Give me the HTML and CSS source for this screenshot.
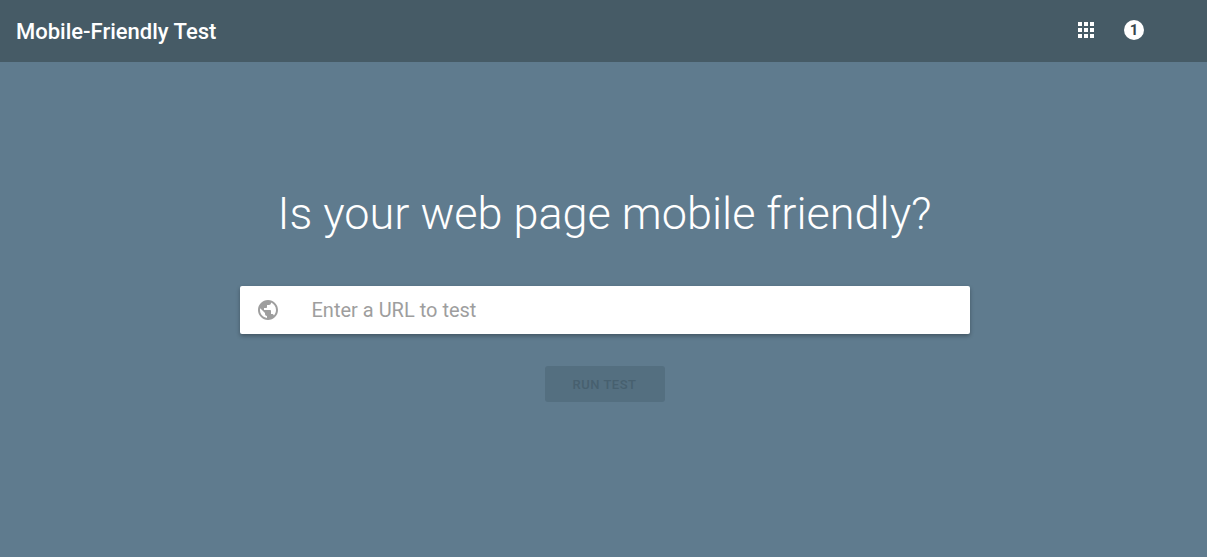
FILE: index.html
```html
<!DOCTYPE html>
<html lang="en">
<head>
    <meta charset="UTF-8">
    <meta name="viewport" content="width=device-width, initial-scale=1.0">
    <title>Mobile-Friendly Test</title>
    <link rel="stylesheet" href="styles.css">
</head>
<body>
    <header class="topbar">
        <h1 class="app-title">Mobile-Friendly Test</h1>
        <div class="topbar-icons">
            <svg class="apps-icon" width="18" height="18" viewBox="0 0 18 18" fill="#fff">
                <rect x="1" y="1" width="4" height="4"/><rect x="7" y="1" width="4" height="4"/><rect x="13" y="1" width="4" height="4"/>
                <rect x="1" y="7" width="4" height="4"/><rect x="7" y="7" width="4" height="4"/><rect x="13" y="7" width="4" height="4"/>
                <rect x="1" y="13" width="4" height="4"/><rect x="7" y="13" width="4" height="4"/><rect x="13" y="13" width="4" height="4"/>
            </svg>
            <span class="badge">1</span>
        </div>
    </header>
    <main class="hero">
        <h2 class="headline">Is your web page mobile friendly?</h2>
        <form class="url-box">
            <svg class="globe" width="24" height="24" viewBox="0 0 24 24" fill="#9e9e9e">
                <path d="M12 2C6.48 2 2 6.48 2 12s4.48 10 10 10 10-4.48 10-10S17.52 2 12 2zm-1 17.93c-3.95-.49-7-3.85-7-7.93 0-.62.08-1.21.21-1.79L9 15v1c0 1.1.9 2 2 2v1.93zm6.9-2.54c-.26-.81-1-1.39-1.9-1.39h-1v-3c0-.55-.45-1-1-1H8v-2h2c.55 0 1-.45 1-1V7h2c1.1 0 2-.9 2-2v-.41c2.93 1.19 5 4.06 5 7.41 0 2.08-.8 3.97-2.1 5.39z"/>
            </svg>
            <input class="url-input" type="text" placeholder="Enter a URL to test">
        </form>
        <button class="run-btn" type="button" disabled>RUN TEST</button>
    </main>
</body>
</html>
```

FILE: styles.css
```css
html, body {
    height: 100%;
}
body {
    margin: 0;
    background-color: #5f7b8e;
    font-family: Roboto, Arial, sans-serif;
    overflow: hidden;
}
.topbar {
    display: flex;
    align-items: center;
    justify-content: space-between;
    height: 62px;
    box-sizing: border-box;
    padding: 0 63px 0 16px;
    background-color: #465b66;
}
.app-title {
    margin: 0;
    color: white;
    font-size: 22px;
    font-weight: 500;
}
.topbar-icons {
    display: flex;
    align-items: center;
    gap: 29px;
    margin-bottom: 2px;
}
.apps-icon {
    display: block;
}
.badge {
    display: flex;
    align-items: center;
    justify-content: center;
    width: 20px;
    height: 20px;
    border-radius: 50%;
    background-color: white;
    color: #37474f;
    font-size: 15px;
    font-weight: 700;
}
.hero {
    display: flex;
    flex-direction: column;
    align-items: center;
    padding: 122px 0 0 2px;
}
.headline {
    margin: 0 0 42px;
    color: white;
    font-size: 45px;
    font-weight: 300;
    line-height: 60px;
}
.url-box {
    display: flex;
    align-items: center;
    width: 730px;
    height: 48px;
    box-sizing: border-box;
    padding-left: 16px;
    background-color: white;
    border-radius: 2px;
    box-shadow: 0 2px 4px rgba(0, 0, 0, 0.3);
}
.globe {
    flex: none;
}
.url-input {
    flex: 1;
    margin-left: 32px;
    border: 0;
    outline: 0;
    padding: 0;
    font-family: inherit;
    font-size: 20px;
    background: transparent;
}
.url-input::placeholder {
    color: #9e9e9e;
    opacity: 1;
}
.run-btn {
    width: 120px;
    height: 36px;
    margin-top: 32px;
    border: 0;
    border-radius: 3px;
    background-color: #546f80;
    color: #47606f;
    font-family: inherit;
    font-size: 13px;
    font-weight: 500;
    letter-spacing: 0.5px;
}
```
